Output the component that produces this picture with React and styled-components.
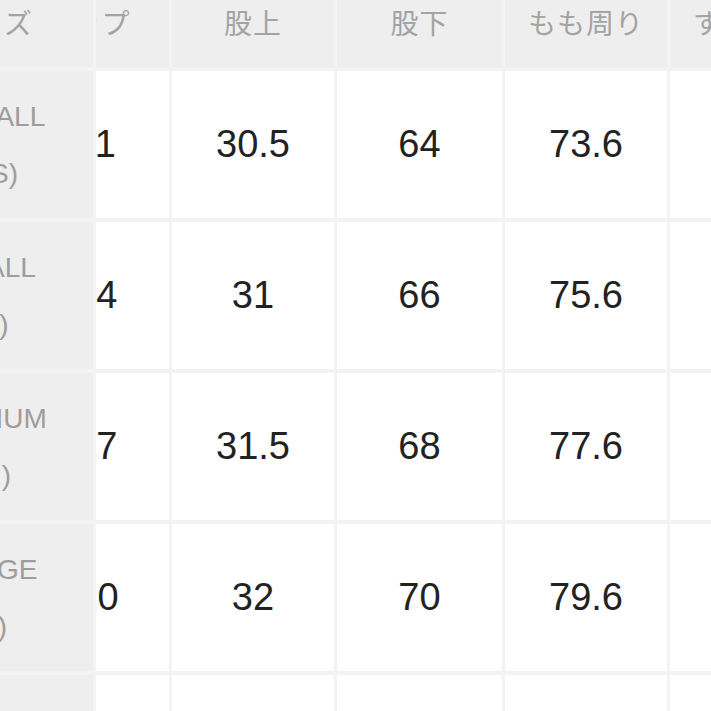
import React from 'react';
import styled, { createGlobalStyle } from 'styled-components';

const GlobalStyle = createGlobalStyle`
    html, body {
        margin: 0;
        padding: 0;
        background: #f3f3f3;
    }
`;

const columns = [
    { key: 'size', label: 'サイズ', width: 93, inner: 206 },
    { key: 'hip', label: 'ヒップ', width: 73, inner: 164 },
    { key: 'rise', label: '股上', width: 162 },
    { key: 'inseam', label: '股下', width: 165 },
    { key: 'thigh', label: 'もも周り', width: 162 },
    { key: 'hem', label: 'すそ周り', width: 162 },
];

const rows = [
    { size: ['XSMALL', '(XS)'], hip: '111', rise: '30.5', inseam: '64', thigh: '73.6', hem: '36' },
    { size: ['SMALL', '(S)'], hip: '114', rise: '31', inseam: '66', thigh: '75.6', hem: '37' },
    { size: ['MEDIUM', '(M)'], hip: '117', rise: '31.5', inseam: '68', thigh: '77.6', hem: '38' },
    { size: ['LARGE', '(L)'], hip: '120', rise: '32', inseam: '70', thigh: '79.6', hem: '39' },
    { size: ['XLARGE', '(XL)'], hip: '123', rise: '32.5', inseam: '72', thigh: '81.6', hem: '40' },
];

const SizeTable = () => {
    return (
        <Viewport>
            <GlobalStyle />
            <Grid $cols={columns.map((c) => `${c.width}px`).join(' ')}>
                {columns.map((c) => (
                    <Cell key={c.key} $tone='head' $clip={!!c.inner}>
                        <Inner $width={c.inner}>{c.label}</Inner>
                    </Cell>
                ))}
                {rows.map((r, i) =>
                    columns.map((c) =>
                        c.key === 'size' ? (
                            <Cell key={i + c.key} $tone='side' $clip>
                                <Inner $width={c.inner}>
                                    <SizeName>{r.size[0]}</SizeName>
                                    <SizeName>{r.size[1]}</SizeName>
                                </Inner>
                            </Cell>
                        ) : (
                            <Cell key={i + c.key} $tone='value' $clip={!!c.inner}>
                                <Inner $width={c.inner}>{r[c.key]}</Inner>
                            </Cell>
                        )
                    )
                )}
            </Grid>
        </Viewport>
    );
};

export default SizeTable;

const tones = {
    head: `
        background: #eeeeee;
        color: #a3a3a3;
        font-family: "Noto Sans CJK JP", "Noto Sans", sans-serif;
        font-size: 28px;
        letter-spacing: 1px;
    `,
    side: `
        background: #eeeeee;
        color: #9d9d9d;
        font-family: "Liberation Sans", Arial, sans-serif;
        font-size: 28px;
    `,
    value: `
        background: #ffffff;
        color: #222222;
        font-family: "Liberation Sans", Arial, sans-serif;
        font-size: 38px;
    `,
};

const Viewport = styled.div`
    width: 711px;
    height: 711px;
    overflow: hidden;
    background: #f3f3f3;
`;

const Grid = styled.div`
    display: grid;
    grid-template-columns: ${(p) => p.$cols};
    grid-template-rows: 90px repeat(5, 147px);
    column-gap: 3px;
    row-gap: 4px;
    width: max-content;
    margin-top: -23px;
`;

const Cell = styled.div`
    display: flex;
    align-items: center;
    justify-content: ${(p) => (p.$clip ? 'flex-end' : 'center')};
    overflow: hidden;
    ${(p) => tones[p.$tone]}
`;

const Inner = styled.div`
    flex-shrink: 0;
    width: ${(p) => (p.$width ? `${p.$width}px` : 'auto')};
    text-align: center;
    white-space: nowrap;
`;

const SizeName = styled.div`
    line-height: 57px;
`;
